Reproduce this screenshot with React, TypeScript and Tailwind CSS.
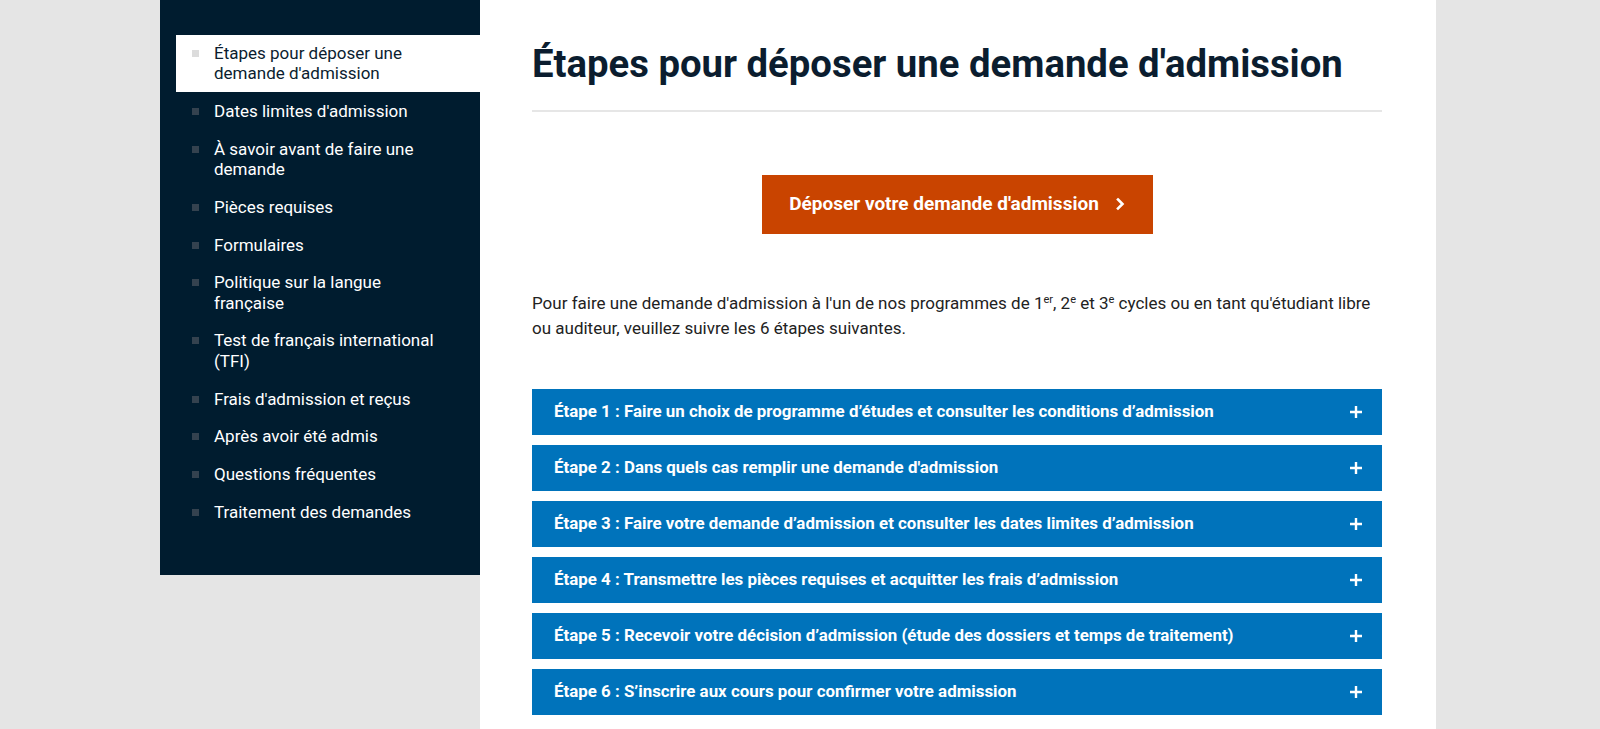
import React from "react";

const items: string[][] = [
  ["Étapes pour déposer une", "demande d'admission"],
  ["Dates limites d'admission"],
  ["À savoir avant de faire une", "demande"],
  ["Pièces requises"],
  ["Formulaires"],
  ["Politique sur la langue", "française"],
  ["Test de français international", "(TFI)"],
  ["Frais d'admission et reçus"],
  ["Après avoir été admis"],
  ["Questions fréquentes"],
  ["Traitement des demandes"],
];

const steps = [
  "Étape 1 : Faire un choix de programme d’études et consulter les conditions d’admission",
  "Étape 2 : Dans quels cas remplir une demande d'admission",
  "Étape 3 : Faire votre demande d’admission et consulter les dates limites d’admission",
  "Étape 4 : Transmettre les pièces requises et acquitter les frais d’admission",
  "Étape 5 : Recevoir votre décision d’admission (étude des dossiers et temps de traitement)",
  "Étape 6 : S’inscrire aux cours pour confirmer votre admission",
];

export default function App() {
  return (
    <div
      className="min-h-[729px] bg-[#e5e5e5] flex"
      style={{ fontFamily: "Roboto, 'Liberation Sans', sans-serif" }}
    >
      <div className="ml-[160px] flex items-start">
        <aside className="w-[320px] bg-[#001c2f] pt-[35px] pb-[45px] pl-[16px]">
          <ul className="flex flex-col gap-[1.3px]">
            {items.map((lines, i) => {
              const active = i === 0;
              return (
                <li
                  key={i}
                  className={`flex items-start py-2 pl-[16px] pr-4 ${
                    active ? "bg-white text-[#0b1d2f]" : "text-white"
                  }`}
                >
                  <span
                    className={`mt-[7px] w-[7px] h-[7px] shrink-0 ${
                      active ? "bg-[#dcdcdc]" : "bg-[#34424f]"
                    }`}
                  />
                  <span className="ml-[15px] text-[17px] leading-[20.4px]">
                    {lines.map((l, j) => (
                      <span key={j} className="block">
                        {l}
                      </span>
                    ))}
                  </span>
                </li>
              );
            })}
          </ul>
        </aside>
        <main className="w-[956px] min-h-[729px] bg-white pl-[52px] pr-[54px] pt-[41px]">
          <h1 className="text-[38.3px] leading-[45.6px] font-bold text-[#0b1d2f]">
            Étapes pour déposer une demande d'admission
          </h1>
          <div className="mt-[23px] h-[2px] bg-[#e6e6e6]" />
          <div className="flex justify-center mt-[63px]">
            <button className="w-[391px] h-[59px] bg-[#c94400] text-white font-bold text-[19px] flex items-center justify-center gap-[17px]">
              <span>Déposer votre demande d'admission</span>
              <svg width="9" height="14" viewBox="0 0 9 14" fill="none">
                <path
                  d="M2 2.5 L6.5 7 L2 11.5"
                  stroke="white"
                  strokeWidth="2.6"
                  strokeLinecap="square"
                />
              </svg>
            </button>
          </div>
          <p className="mt-[57px] text-[17px] leading-[25.5px] text-[#222222]">
            Pour faire une demande d'admission à l'un de nos programmes de 1
            <sup className="text-[11px] leading-none">er</sup>, 2
            <sup className="text-[11px] leading-none">e</sup> et 3
            <sup className="text-[11px] leading-none">e</sup> cycles ou en tant qu'étudiant libre
            ou auditeur, veuillez suivre les 6 étapes suivantes.
          </p>
          <div className="mt-[47px] flex flex-col gap-[10px]">
            {steps.map((s, i) => (
              <div
                key={i}
                className="h-[46px] bg-[#0073bb] text-white font-bold text-[16.9px] flex items-center justify-between pl-[22px] pr-[20px]"
              >
                <span>{s}</span>
                <svg width="12" height="12" viewBox="0 0 12 12">
                  <path d="M6 0 V12 M0 6 H12" stroke="white" strokeWidth="2.4" />
                </svg>
              </div>
            ))}
          </div>
        </main>
      </div>
    </div>
  );
}
